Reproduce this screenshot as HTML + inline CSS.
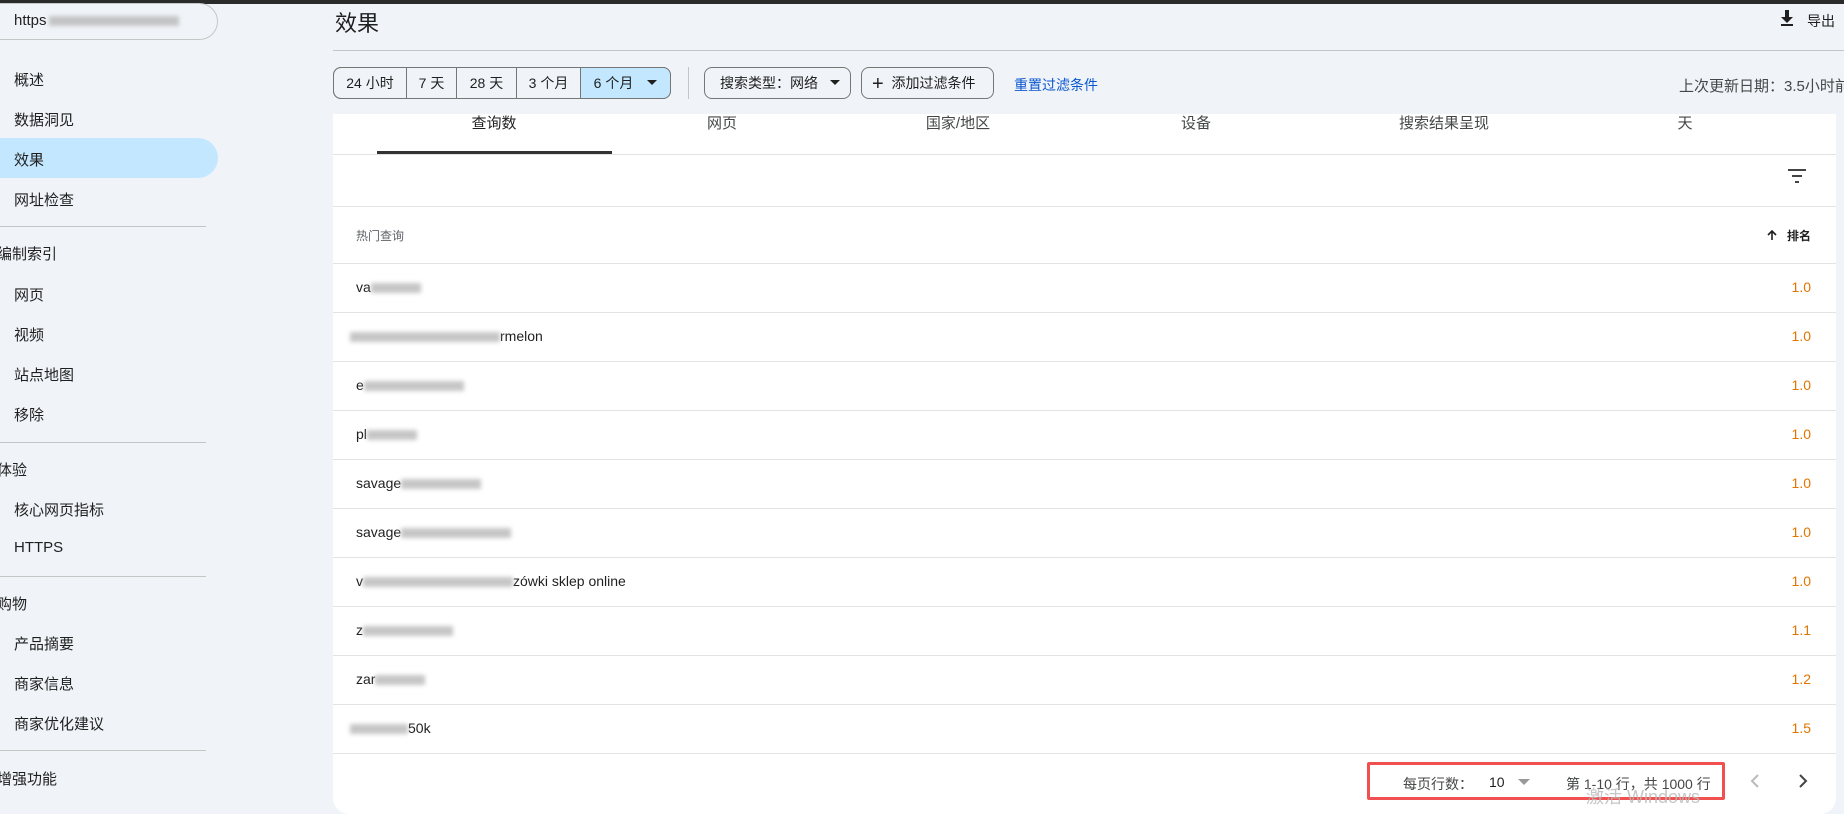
<!DOCTYPE html>
<html><head><meta charset="utf-8"><style>
*{margin:0;padding:0;box-sizing:border-box}
body{width:1844px;height:808px;overflow:hidden;background:#f0f4f9;font-family:"Liberation Sans","Noto Sans CJK SC",sans-serif;color:#1f1f1f;position:relative}
.a{position:absolute;white-space:nowrap}
.blur{display:inline-block;height:10px;background:#b8b8b8;filter:blur(2px);vertical-align:middle;opacity:.8}
.nav{font-size:15px;color:#1f1f1f}
.hr{position:absolute;height:1px;background:#c4c7c5}
.seg{position:absolute;top:67px;height:32px;border:1px solid #747775;font-size:14px;display:flex;align-items:center;justify-content:center;color:#1f1f1f}
.row{position:absolute;left:333px;width:1503px;height:1px;background:#e3e3e3}
.q{position:absolute;left:356px;font-size:14px;color:#1f1f1f}
.v{position:absolute;right:33px;font-size:14px;color:#e37400}
.tab{position:absolute;top:112px;font-size:15px;color:#444746;transform:translateX(-50%)}
</style></head><body>
<div class="a" style="left:0;top:0;width:1844px;height:4px;background:#2b2b2b"></div>
<div class="a" style="left:-20px;top:3px;width:238px;height:37px;border:1px solid #c4c7c5;border-radius:20px;background:#f0f4f9"></div>
<div class="a" style="left:14px;top:12px;font-size:15px">https<span class="blur" style="width:130px;margin-left:2px"></span></div>
<div class="a" style="left:0;top:138px;width:218px;height:40px;background:#c2e7ff;border-radius:0 20px 20px 0"></div>
<div class="a nav" style="left:14px;top:69px">概述</div>
<div class="a nav" style="left:14px;top:109px">数据洞见</div>
<div class="a nav" style="left:14px;top:149px">效果</div>
<div class="a nav" style="left:14px;top:189px">网址检查</div>
<div class="hr" style="left:0;top:226px;width:206px"></div>
<div class="a nav" style="left:-3px;top:243px">编制索引</div>
<div class="a nav" style="left:14px;top:284px">网页</div>
<div class="a nav" style="left:14px;top:324px">视频</div>
<div class="a nav" style="left:14px;top:364px">站点地图</div>
<div class="a nav" style="left:14px;top:404px">移除</div>
<div class="hr" style="left:0;top:442px;width:206px"></div>
<div class="a nav" style="left:-3px;top:459px">体验</div>
<div class="a nav" style="left:14px;top:499px">核心网页指标</div>
<div class="a nav" style="left:14px;top:539px">HTTPS</div>
<div class="hr" style="left:0;top:576px;width:206px"></div>
<div class="a nav" style="left:-3px;top:593px">购物</div>
<div class="a nav" style="left:14px;top:633px">产品摘要</div>
<div class="a nav" style="left:14px;top:673px">商家信息</div>
<div class="a nav" style="left:14px;top:713px">商家优化建议</div>
<div class="hr" style="left:0;top:750px;width:206px"></div>
<div class="a nav" style="left:-3px;top:768px">增强功能</div>

<div class="a" style="left:335px;top:6px;font-size:22px">效果</div>
<svg class="a" style="left:1778px;top:9px" width="18" height="18" viewBox="0 0 18 18"><path d="M7 1h4v7h4l-6 6-6-6h4z" fill="#1f1f1f"/><rect x="3" y="15" width="12" height="2" fill="#1f1f1f"/></svg>
<div class="a" style="left:1807px;top:11px;font-size:14px">导出</div>
<div class="hr" style="left:333px;top:50px;width:1511px"></div>

<div class="a" style="left:333px;top:67px;width:338px;height:32px;border:1px solid #747775;border-radius:8px;overflow:hidden">
<div style="position:absolute;left:247px;top:0;width:91px;height:32px;background:#c2e7ff"></div></div>
<div class="seg" style="left:333px;width:73px;border-right:none;border-radius:8px 0 0 8px">24 小时</div>
<div class="seg" style="left:406px;width:50px;border-right:none">7 天</div>
<div class="seg" style="left:456px;width:60px;border-right:none">28 天</div>
<div class="seg" style="left:516px;width:64px;border-right:none">3 个月</div>
<div class="seg" style="left:580px;width:91px;border-radius:0 8px 8px 0;background:#c2e7ff">6 个月 <svg width="10" height="6" style="margin-left:14px"><path d="M0 0h10L5 5z" fill="#1f1f1f"/></svg></div>
<div class="a" style="left:688px;top:67px;width:1px;height:32px;background:#c4c7c5"></div>
<div class="a" style="left:704px;top:67px;width:147px;height:32px;border:1px solid #747775;border-radius:8px;font-size:14px;line-height:30px;padding-left:15px">搜索类型：网络 <svg width="10" height="6" style="margin-left:8px;vertical-align:2px"><path d="M0 0h10L5 5z" fill="#1f1f1f"/></svg></div>
<div class="a" style="left:861px;top:67px;width:133px;height:32px;border:1px solid #747775;border-radius:8px;font-size:14px;line-height:30px;padding-left:10px"><span style="font-size:20px;vertical-align:-2px">+</span>&nbsp; 添加过滤条件</div>
<div class="a" style="left:1014px;top:75px;font-size:14px;color:#0b57d0">重置过滤条件</div>
<div class="a" style="left:1679px;top:75px;font-size:15px;color:#444746">上次更新日期：3.5小时前</div>

<div class="a" style="left:333px;top:114px;width:1503px;height:700px;background:#fff;border-radius:0 0 16px 16px"></div>
<div class="tab" style="left:494px;color:#1f1f1f">查询数</div>
<div class="tab" style="left:722px">网页</div>
<div class="tab" style="left:958px">国家/地区</div>
<div class="tab" style="left:1196px">设备</div>
<div class="tab" style="left:1444px">搜索结果呈现</div>
<div class="tab" style="left:1685px">天</div>
<div class="a" style="left:377px;top:151px;width:235px;height:3px;background:#333"></div>
<div class="row" style="top:154px"></div>
<svg class="a" style="left:1787px;top:168px" width="20" height="16"><rect x="1" y="1" width="18" height="2" fill="#444"/><rect x="5" y="7" width="10" height="2" fill="#444"/><rect x="8" y="13" width="4" height="2" fill="#444"/></svg>
<div class="row" style="top:206px"></div>
<div class="a" style="left:356px;top:227px;font-size:12px;color:#5f6368">热门查询</div>
<svg class="a" style="left:1766px;top:229px" width="12" height="12" viewBox="0 0 12 12"><path d="M6 11V2M2 6l4-4 4 4" stroke="#1f1f1f" stroke-width="1.6" fill="none"/></svg>
<div class="a" style="left:1787px;top:227px;font-size:12px;font-weight:bold">排名</div>
<div class="row" style="top:263px"></div>

<div class="q" style="top:279px">va<span class="blur" style="width:50px"></span></div><div class="v" style="top:279px">1.0</div>
<div class="row" style="top:312px"></div>
<div class="q" style="top:328px;left:350px"><span class="blur" style="width:150px"></span>rmelon</div><div class="v" style="top:328px">1.0</div>
<div class="row" style="top:361px"></div>
<div class="q" style="top:377px">e<span class="blur" style="width:100px"></span></div><div class="v" style="top:377px">1.0</div>
<div class="row" style="top:410px"></div>
<div class="q" style="top:426px">pl<span class="blur" style="width:50px"></span></div><div class="v" style="top:426px">1.0</div>
<div class="row" style="top:459px"></div>
<div class="q" style="top:475px">savage<span class="blur" style="width:80px"></span></div><div class="v" style="top:475px">1.0</div>
<div class="row" style="top:508px"></div>
<div class="q" style="top:524px">savage<span class="blur" style="width:110px"></span></div><div class="v" style="top:524px">1.0</div>
<div class="row" style="top:557px"></div>
<div class="q" style="top:573px">v<span class="blur" style="width:150px"></span>zówki sklep online</div><div class="v" style="top:573px">1.0</div>
<div class="row" style="top:606px"></div>
<div class="q" style="top:622px">z<span class="blur" style="width:90px"></span></div><div class="v" style="top:622px">1.1</div>
<div class="row" style="top:655px"></div>
<div class="q" style="top:671px">zar<span class="blur" style="width:50px"></span></div><div class="v" style="top:671px">1.2</div>
<div class="row" style="top:704px"></div>
<div class="q" style="top:720px;left:350px"><span class="blur" style="width:58px"></span>50k</div><div class="v" style="top:720px">1.5</div>
<div class="row" style="top:753px"></div>

<div class="a" style="left:1367px;top:762px;width:358px;height:38px;border:3px solid #f0504f;border-radius:2px"></div>
<div class="a" style="left:1403px;top:774px;font-size:14px;color:#444746">每页行数：</div>
<div class="a" style="left:1489px;top:774px;font-size:14px">10</div>
<svg class="a" style="left:1518px;top:779px" width="12" height="7"><path d="M0 0h12L6 6z" fill="#999"/></svg>
<div class="a" style="left:1566px;top:774px;font-size:14px;color:#444746">第 1-10 行，共 1000 行</div>
<div class="a" style="left:1586px;top:783px;font-size:18px;color:#b8b8b8;opacity:.8">激活 Windows</div>
<svg class="a" style="left:1750px;top:773px" width="10" height="16"><path d="M8 2L2 8l6 6" stroke="#bbb" stroke-width="2" fill="none"/></svg>
<svg class="a" style="left:1798px;top:773px" width="10" height="16"><path d="M2 2l6 6-6 6" stroke="#444" stroke-width="2" fill="none"/></svg>
</body></html>
